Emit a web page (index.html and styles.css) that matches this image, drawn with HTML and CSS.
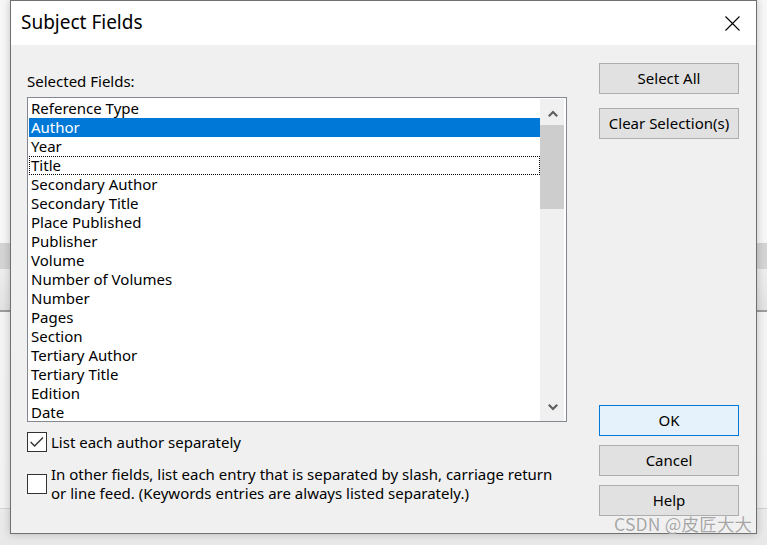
FILE: index.html
```html
<!DOCTYPE html>
<html lang="en">
<head>
<meta charset="utf-8">
<title>Subject Fields</title>
<link rel="stylesheet" href="styles.css">
</head>
<body>
<div class="dialog">
  <div class="titlebar">
    <span class="title">Subject Fields</span>
    <svg class="close" viewBox="0 0 15 15" width="15" height="15"><path d="M0.5 0.5 L14.5 14.5 M14.5 0.5 L0.5 14.5" stroke="#000" stroke-width="1.1" fill="none"/></svg>
  </div>
  <div class="content">
    <div class="left">
      <div class="label">Selected Fields:</div>
      <div class="listbox">
        <ul class="items">
          <li>Reference Type</li>
          <li class="selected">Author</li>
          <li>Year</li>
          <li class="focused">Title</li>
          <li>Secondary Author</li>
          <li>Secondary Title</li>
          <li>Place Published</li>
          <li>Publisher</li>
          <li>Volume</li>
          <li>Number of Volumes</li>
          <li>Number</li>
          <li>Pages</li>
          <li>Section</li>
          <li>Tertiary Author</li>
          <li>Tertiary Title</li>
          <li>Edition</li>
          <li>Date</li>
        </ul>
        <div class="scrollbar">
          <div class="arrow"><svg viewBox="0 0 24 26" width="24" height="26"><polyline points="8.8,17.3 13,13 17.2,17.3" fill="none" stroke="#606060" stroke-width="2.2"/></svg></div>
          <div class="track"><div class="thumb"></div></div>
          <div class="arrow"><svg viewBox="0 0 24 26" width="24" height="26"><polyline points="8.8,9.7 13,14 17.2,9.7" fill="none" stroke="#606060" stroke-width="2.2"/></svg></div>
        </div>
      </div>
      <div class="check-row first">
        <span class="box"><svg viewBox="0 0 18 18" width="18" height="18"><polyline points="2.6,9 6.6,13 15,4.6" fill="none" stroke="#333" stroke-width="1.4"/></svg></span>
        <span class="check-text">List each author separately</span>
      </div>
      <div class="check-row second">
        <span class="box"></span>
        <span class="check-text">In other fields, list each entry that is separated by slash, carriage return<br>or line feed. (Keywords entries are always listed separately.)</span>
      </div>
    </div>
    <div class="right">
      <button class="btn">Select All</button>
      <button class="btn second-btn">Clear Selection(s)</button>
      <button class="btn ok">OK</button>
      <button class="btn stack">Cancel</button>
      <button class="btn stack">Help</button>
    </div>
  </div>
</div>
<div class="watermark">CSDN @皮匠大大</div>
</body>
</html>
```

FILE: styles.css
```css
html, body {
  margin: 0;
  height: 100%;
}

body {
  position: relative;
  overflow: hidden;
  font-family: "Noto Sans", "Open Sans", sans-serif;
  font-size: 15px;
  color: #000;
  background: linear-gradient(to bottom,
    #f7f7f7 0, #f7f7f7 243px,
    #d4d4d4 243px, #d4d4d4 269px,
    #ededed 269px, #ededed 271px,
    #eeeeee 271px, #e2e2e2 310px,
    #9c9c9c 310px, #9c9c9c 312px,
    #f4f4f4 312px, #f2f2f2 508px,
    #d2d2d2 508px, #d2d2d2 509px,
    #ebebeb 509px, #e8e8e8 545px);
}

.dialog {
  margin-left: 10px;
  width: 747px;
  height: 534px;
  box-sizing: border-box;
  border: 1px solid #707070;
  background: #f0f0f0;
  box-shadow: 0 0 8px rgba(0, 0, 0, 0.22);
  display: flex;
  flex-direction: column;
}

.titlebar {
  flex: none;
  height: 44px;
  background: #fff;
  display: flex;
  align-items: center;
  justify-content: space-between;
  padding-left: 10px;
}

.title {
  font-size: 19px;
  line-height: 26px;
  margin-top: -2px;
}

.close {
  display: block;
  margin-right: 16px;
}

.content {
  flex: 1;
  display: flex;
  gap: 32px;
  padding: 18px 17px 17px 16px;
}

.left {
  width: 540px;
  display: flex;
  flex-direction: column;
}

.label {
  margin-top: 9px;
  margin-bottom: 6px;
  line-height: 19px;
}

.listbox {
  height: 325px;
  box-sizing: border-box;
  border: 1px solid #828790;
  background: #fff;
  padding: 1px 2px 0 1px;
  display: flex;
}

.items {
  flex: 1;
  list-style: none;
  margin: 0;
  padding: 0;
  overflow: hidden;
}

.items li {
  height: 19px;
  line-height: 19px;
  padding-left: 2px;
  white-space: nowrap;
}

.items li.selected {
  background: #0078d7;
  color: #fff;
}

.items li.focused {
  outline: 1px dotted #000;
  outline-offset: -1px;
}

.scrollbar {
  width: 24px;
  flex: none;
  background: #f0f0f0;
  display: flex;
  flex-direction: column;
}

.arrow {
  height: 26px;
  flex: none;
}

.arrow svg {
  display: block;
}

.track {
  flex: 1;
}

.thumb {
  height: 84px;
  background: #cdcdcd;
}

.check-row {
  display: flex;
  align-items: center;
  gap: 4px;
  line-height: 19px;
}

.check-row.first {
  margin-top: 10px;
}

.check-row.second {
  margin-top: 13px;
}

.box {
  flex: none;
  width: 20px;
  height: 20px;
  box-sizing: border-box;
  border: 1px solid #333;
  background: #fff;
}

.box svg {
  display: block;
}

.right {
  width: 140px;
  display: flex;
  flex-direction: column;
}

.btn {
  width: 140px;
  height: 31px;
  box-sizing: border-box;
  border: 1px solid #adadad;
  background: #e1e1e1;
  font-family: "Noto Sans", "Open Sans", sans-serif;
  font-size: 15px;
  color: #000;
  padding: 0;
  line-height: 19px;
}

.btn.second-btn {
  margin-top: 14px;
}

.btn.ok {
  margin-top: auto;
  background: #e5f1fb;
  border-color: #0078d7;
}

.btn.stack {
  margin-top: 9px;
}

.watermark {
  position: absolute;
  left: 614px;
  top: 514px;
  font-family: "Noto Sans CJK SC", "Noto Sans", sans-serif;
  font-size: 17.5px;
  line-height: 20px;
  letter-spacing: 0.2px;
  color: rgba(150, 150, 150, 0.85);
  text-shadow: 0 0 1px rgba(255, 255, 255, 0.8);
  white-space: nowrap;
}
```
